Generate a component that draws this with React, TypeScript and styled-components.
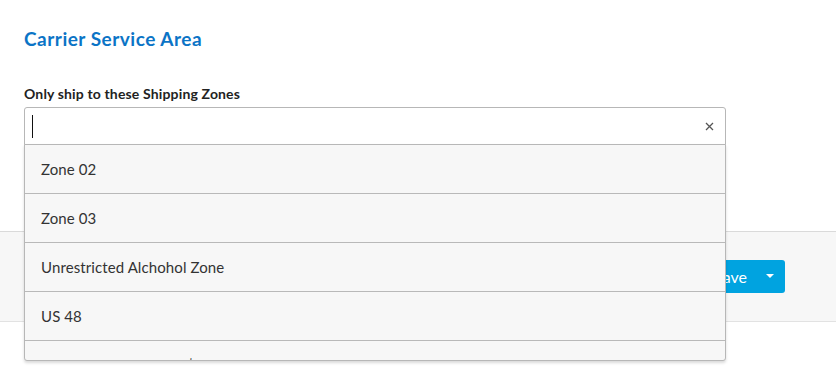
import React from "react";
import styled, { createGlobalStyle } from "styled-components";

const Global = createGlobalStyle`
  html, body { margin: 0; padding: 0; background: #fff; }
  body { font-family: Lato, "Open Sans", Arial, sans-serif; color: #333; }
  * { box-sizing: border-box; }
`;

const Page = styled.div`
  width: 836px;
  height: 388px;
  overflow: hidden;
  position: relative;
`;

const Section = styled.section`
  padding: 26px 24px 0 24px;
  height: 231px;
`;

const Title = styled.h2`
  margin: 0;
  font-size: 19px;
  line-height: 26px;
  font-weight: 700;
  letter-spacing: 0.5px;
  color: #0b74c6;
`;

const Label = styled.label`
  display: block;
  margin-top: 33px;
  font-size: 14px;
  line-height: 18px;
  font-weight: 700;
  letter-spacing: 0.15px;
  color: #222;
`;

const SelectWrap = styled.div`
  position: relative;
  margin-top: 4px;
  width: 702px;
`;

const Control = styled.div`
  height: 38px;
  border: 1px solid #b7b7b7;
  border-radius: 3px 3px 0 0;
  background: #fff;
  display: flex;
  align-items: center;
  padding: 0 10px 0 7px;
`;

const Caret = styled.span`
  width: 1px;
  height: 23px;
  background: #111;
`;

const Spacer = styled.div`
  flex: 1;
`;

const Clear = styled.span`
  display: flex;
  align-items: center;
  justify-content: center;
  width: 12px;
  height: 12px;
`;

const Menu = styled.ul`
  position: absolute;
  left: 0;
  right: 0;
  top: 37px;
  margin: 0;
  padding: 0;
  list-style: none;
  height: 217px;
  overflow: hidden;
  background: #f7f7f7;
  border: 1px solid #b7b7b7;
  border-radius: 0 0 3px 3px;
  box-shadow: 0 2px 3px rgba(0, 0, 0, 0.15);
  z-index: 2;
`;

const Option = styled.li`
  height: 49px;
  border-bottom: 1px solid #b9b9b9;
  display: flex;
  align-items: center;
  padding: 0 16px;
  font-size: 15px;
  letter-spacing: 0.1px;
  color: #333;
  white-space: nowrap;
`;

const Footer = styled.footer`
  height: 91px;
  background: #f7f7f7;
  border-top: 1px solid #dadada;
  border-bottom: 1px solid #e2e2e2;
  display: flex;
  align-items: center;
  justify-content: flex-end;
  padding-right: 51px;
`;

const SplitButton = styled.div`
  display: flex;
  height: 33px;
  margin-top: -1px;
  background: #00a3e0;
  border-radius: 3px;
  color: #fff;
  font-size: 16px;
`;

const ButtonMain = styled.span`
  display: flex;
  align-items: center;
  padding: 0 8px 0 16px;
`;

const ButtonCaret = styled.span`
  display: flex;
  align-items: center;
  justify-content: center;
  width: 30px;
`;

const options = [
  "Zone 02",
  "Zone 03",
  "Unrestricted Alchohol Zone",
  "US 48",
  "Local Delivery Zone - $10 Flat Rate",
];

export default function App() {
  return (
    <Page>
      <Global />
      <Section>
        <Title>Carrier Service Area</Title>
        <Label>Only ship to these Shipping Zones</Label>
        <SelectWrap>
          <Control>
            <Caret />
            <Spacer />
            <Clear>
              <svg width="9" height="9" viewBox="0 0 9 9">
                <path d="M1 1L8 8M8 1L1 8" stroke="#555" strokeWidth="1.3" />
              </svg>
            </Clear>
          </Control>
          <Menu>
            {options.map((o) => (
              <Option key={o}>{o}</Option>
            ))}
          </Menu>
        </SelectWrap>
      </Section>
      <Footer>
        <SplitButton>
          <ButtonMain>Save</ButtonMain>
          <ButtonCaret>
            <svg width="8" height="4" viewBox="0 0 8 4">
              <path d="M0 0H8L4 4Z" fill="#fff" />
            </svg>
          </ButtonCaret>
        </SplitButton>
      </Footer>
    </Page>
  );
}
